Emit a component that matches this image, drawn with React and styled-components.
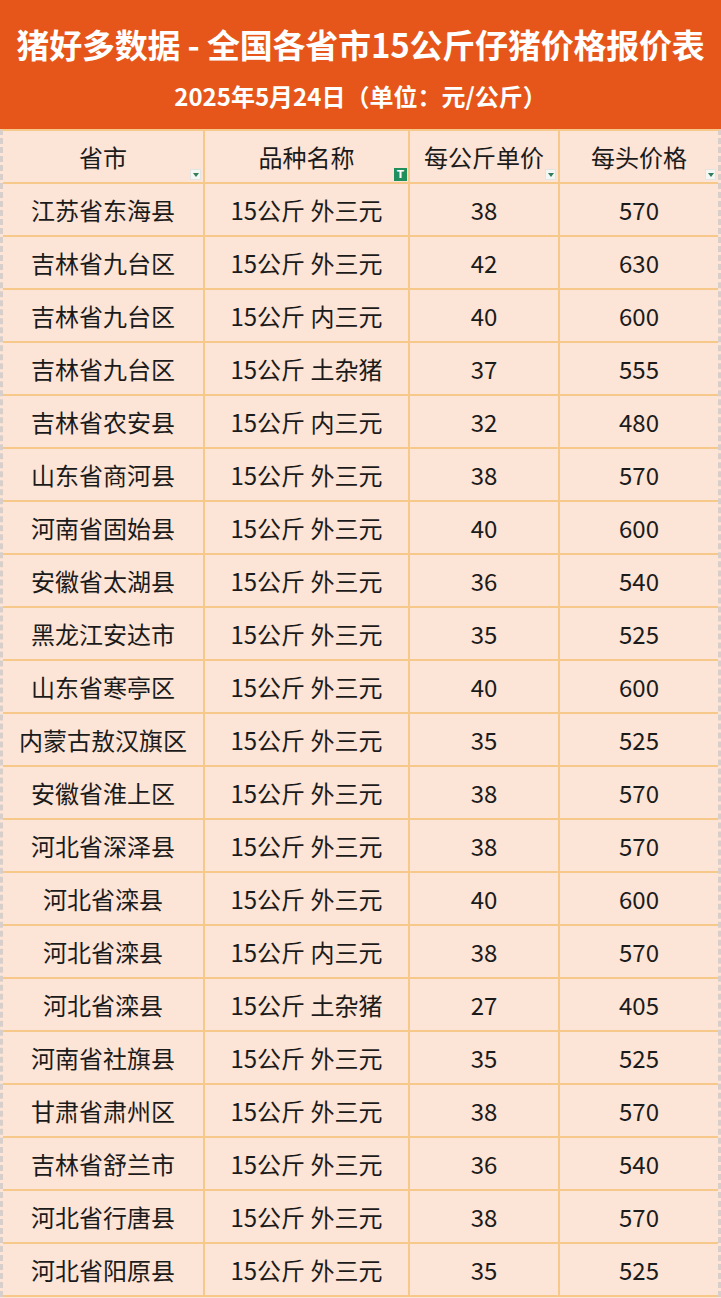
import React from "react";
import styled, { createGlobalStyle } from "styled-components";

const GlobalStyle = createGlobalStyle`
  html, body {
    margin: 0;
    padding: 0;
    background: #ffffff;
  }
  body {
    font-family: "Noto Sans CJK SC", "Noto Sans", sans-serif;
  }
`;

const Page = styled.div`
  width: 721px;
  height: 1298px;
  overflow: hidden;
  background: #fce4d6;
`;

const Banner = styled.div`
  height: 129px;
  box-sizing: border-box;
  background: #e6561a;
  color: #ffffff;
  display: flex;
  flex-direction: column;
  align-items: center;
  padding-top: 22px;
`;

const Title = styled.div`
  font-size: 33px;
  line-height: 44px;
  font-weight: 700;
  letter-spacing: -0.2px;
  white-space: nowrap;
`;

const Subtitle = styled.div`
  margin-top: 14px;
  font-size: 24px;
  line-height: 32px;
  font-weight: 700;
  white-space: nowrap;
`;

const Table = styled.div`
  display: grid;
  grid-template-columns: 202px 205px 150px 1fr;
  border-top: 2px solid #f6c98a;
  border-left: 3px dashed #d9cfca;
  border-right: 3px dashed #d9cfca;
  box-sizing: border-box;
  width: 721px;
`;

const Cell = styled.div`
  position: relative;
  height: 53px;
  box-sizing: border-box;
  display: flex;
  align-items: center;
  justify-content: center;
  border-bottom: 2px solid #f6c98a;
  border-right: ${(p) => (p.$last ? "none" : "2px solid #f6c98a")};
  font-size: 24px;
  color: #1b1b1b;
  white-space: nowrap;
  background: #fce4d6;
`;

const FilterBox = styled.span`
  position: absolute;
  right: 2px;
  bottom: 2px;
  width: 11px;
  height: 11px;
  box-sizing: border-box;
  background: #f3f6f3;
  border: 1px solid #e4e4e4;
  display: flex;
  align-items: center;
  justify-content: center;

  &::after {
    content: "";
    width: 0;
    height: 0;
    border-left: 3px solid transparent;
    border-right: 3px solid transparent;
    border-top: 4px solid #2f7d5a;
  }
`;

const ActiveFilter = styled.span`
  position: absolute;
  right: 1px;
  bottom: 1px;
  width: 13px;
  height: 13px;
  background: #1f8f5c;
  color: #ffffff;
  font-family: "DejaVu Sans", sans-serif;
  font-size: 10px;
  font-weight: 700;
  line-height: 13px;
  text-align: center;
`;

const headers = ["省市", "品种名称", "每公斤单价", "每头价格"];

const rows = [
  ["江苏省东海县", "15公斤 外三元", 38, 570],
  ["吉林省九台区", "15公斤 外三元", 42, 630],
  ["吉林省九台区", "15公斤 内三元", 40, 600],
  ["吉林省九台区", "15公斤 土杂猪", 37, 555],
  ["吉林省农安县", "15公斤 内三元", 32, 480],
  ["山东省商河县", "15公斤 外三元", 38, 570],
  ["河南省固始县", "15公斤 外三元", 40, 600],
  ["安徽省太湖县", "15公斤 外三元", 36, 540],
  ["黑龙江安达市", "15公斤 外三元", 35, 525],
  ["山东省寒亭区", "15公斤 外三元", 40, 600],
  ["内蒙古敖汉旗区", "15公斤 外三元", 35, 525],
  ["安徽省淮上区", "15公斤 外三元", 38, 570],
  ["河北省深泽县", "15公斤 外三元", 38, 570],
  ["河北省滦县", "15公斤 外三元", 40, 600],
  ["河北省滦县", "15公斤 内三元", 38, 570],
  ["河北省滦县", "15公斤 土杂猪", 27, 405],
  ["河南省社旗县", "15公斤 外三元", 35, 525],
  ["甘肃省肃州区", "15公斤 外三元", 38, 570],
  ["吉林省舒兰市", "15公斤 外三元", 36, 540],
  ["河北省行唐县", "15公斤 外三元", 38, 570],
  ["河北省阳原县", "15公斤 外三元", 35, 525],
];

function App() {
  return (
    <Page>
      <GlobalStyle />
      <Banner>
        <Title>猪好多数据 - 全国各省市15公斤仔猪价格报价表</Title>
        <Subtitle>2025年5月24日（单位：元/公斤）</Subtitle>
      </Banner>
      <Table>
        {headers.map((h, i) => (
          <Cell key={h} $last={i === 3}>
            {h}
            {i === 1 ? <ActiveFilter>T</ActiveFilter> : <FilterBox />}
          </Cell>
        ))}
        {rows.map((r, ri) =>
          r.map((v, ci) => (
            <Cell key={ri + "-" + ci} $last={ci === 3}>
              {v}
            </Cell>
          ))
        )}
      </Table>
    </Page>
  );
}

export default App;
